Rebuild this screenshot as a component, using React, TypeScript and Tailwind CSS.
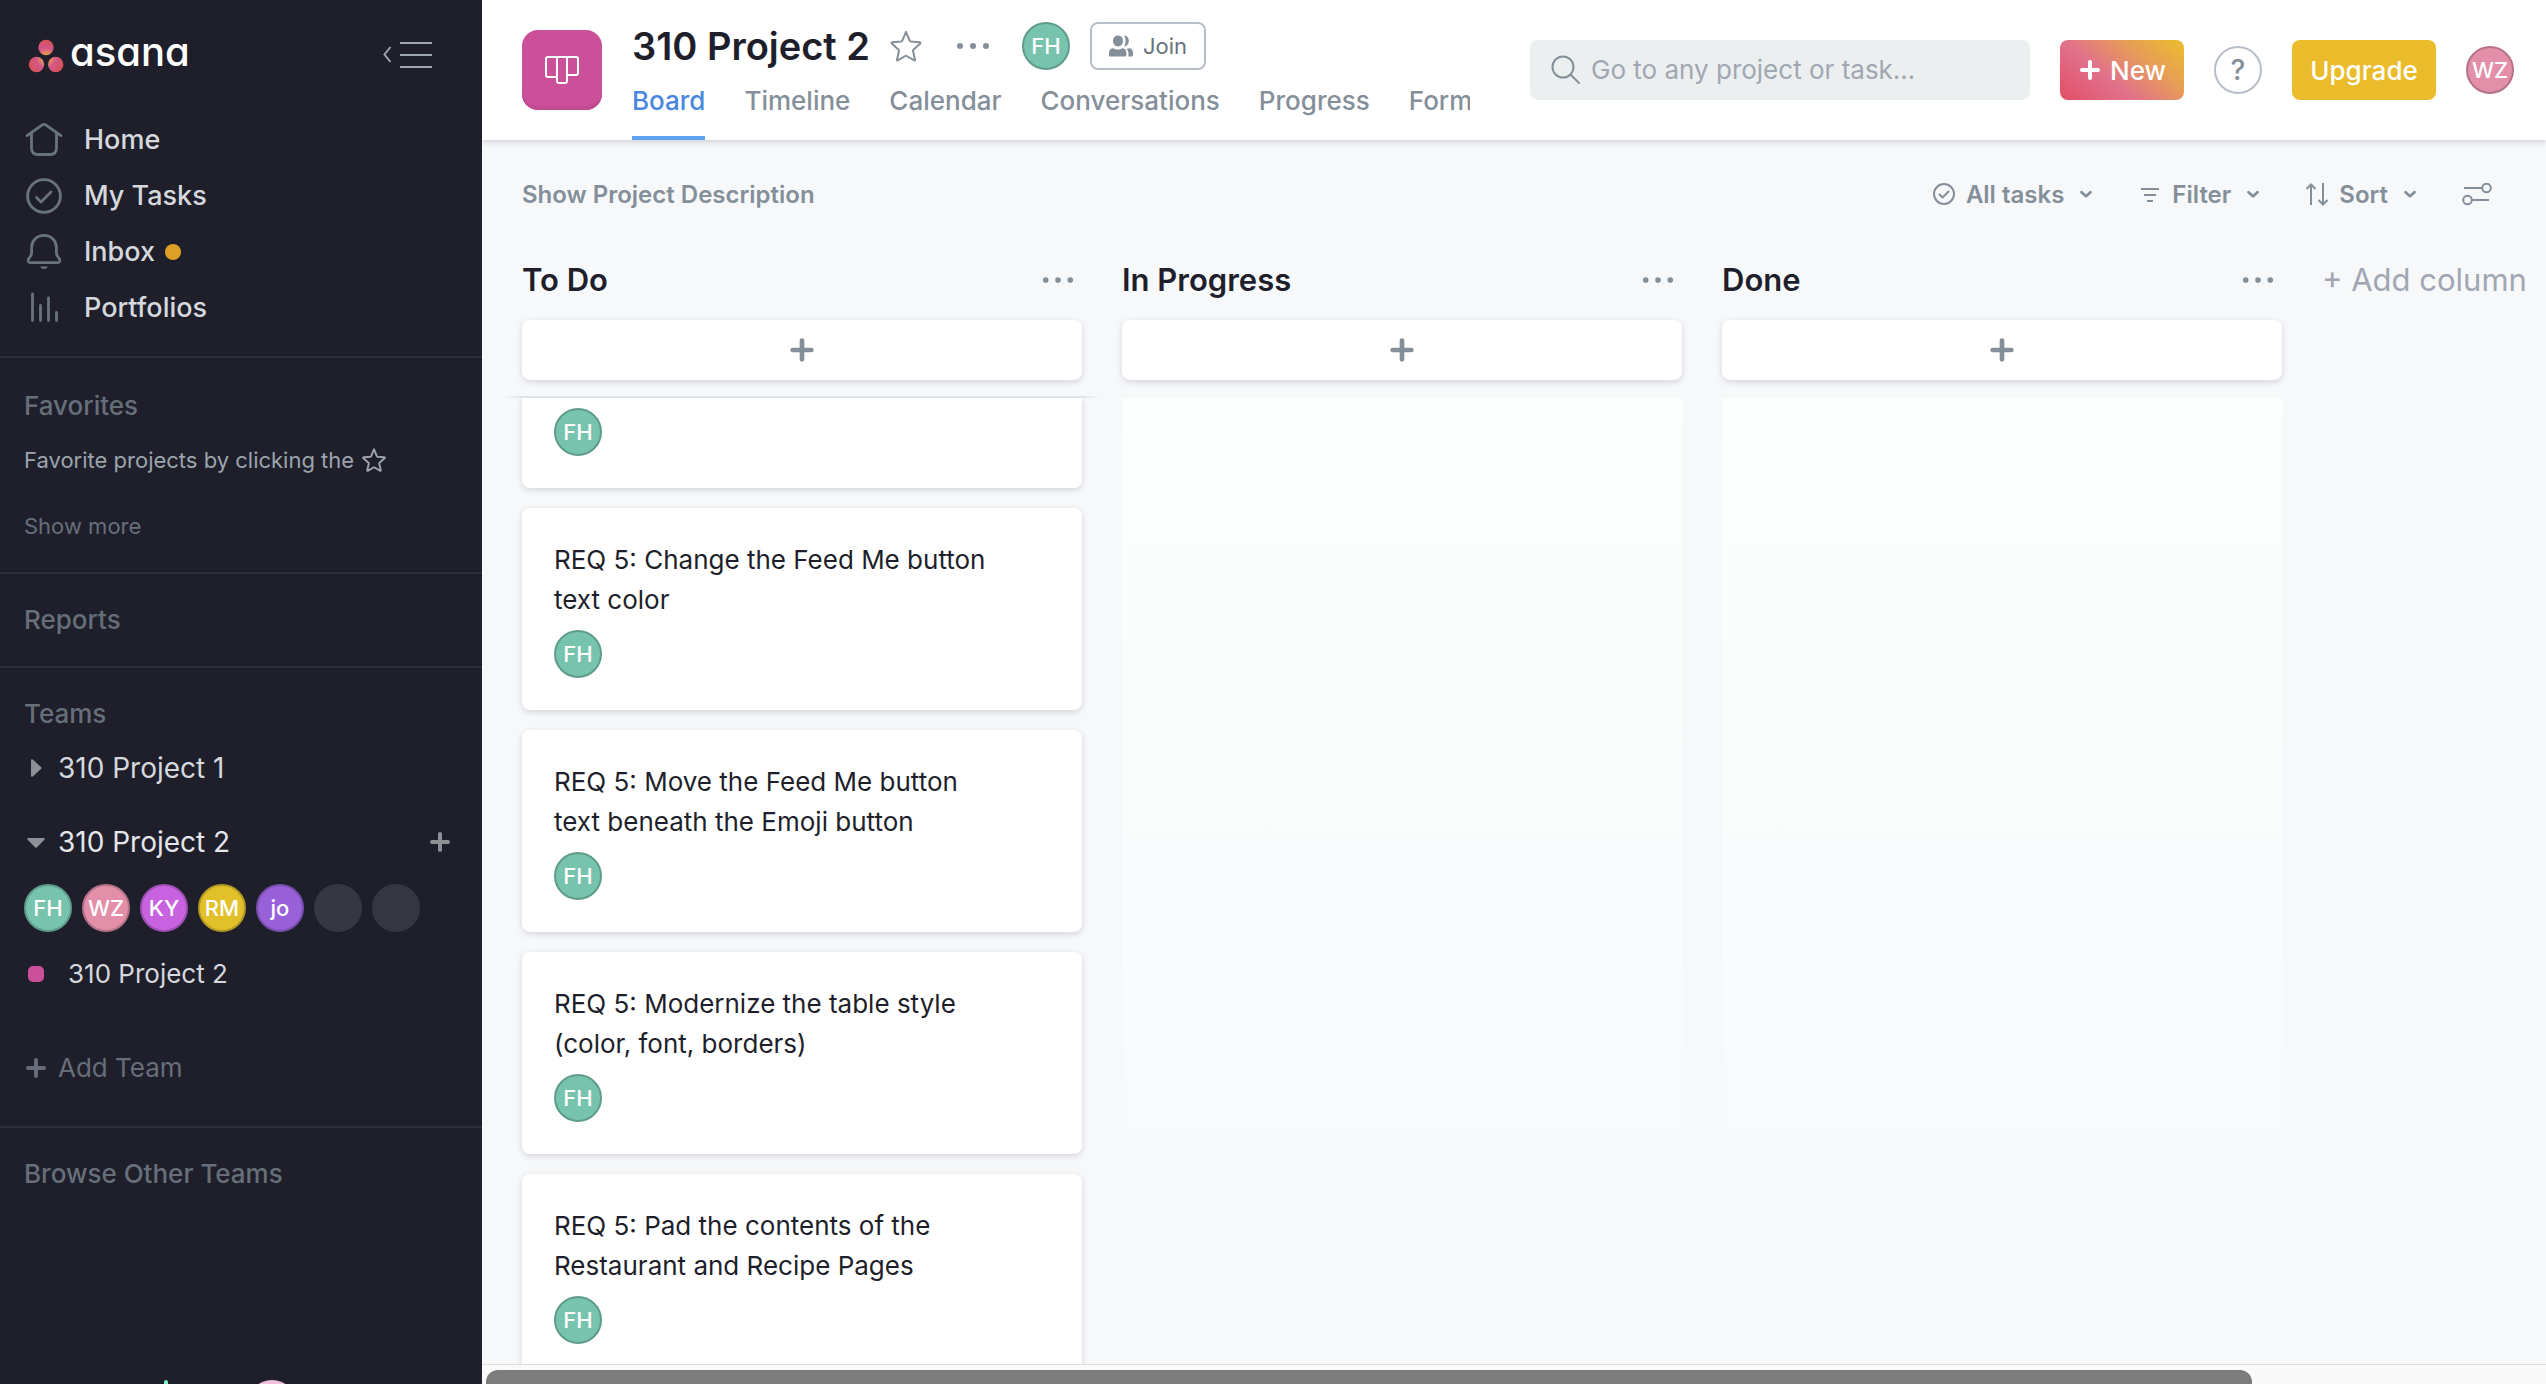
import type { ReactNode } from "react";

type Tone = "teal" | "rose" | "magenta" | "yellow" | "violet" | "empty";

const tones: Record<Tone, string> = {
  teal: "bg-[#78c3ad] border-[#5f9c8a]",
  rose: "bg-[#e38fa9] border-[#b67287]",
  magenta: "bg-[#c862e0] border-[#a04eb3]",
  yellow: "bg-[#e2c02a] border-[#b59a22]",
  violet: "bg-[#9861da] border-[#7a4eae]",
  empty: "bg-[#353840] border-[#353840]",
};

function Avatar({ initials = "", tone }: { initials?: string; tone: Tone }) {
  return (
    <span
      className={`flex size-12 shrink-0 items-center justify-center rounded-full border-2 text-[22px] leading-none font-medium text-white ${tones[tone]}`}
    >
      {initials}
    </span>
  );
}

function Plus({ className }: { className: string }) {
  return (
    <svg viewBox="0 0 24 24" className={`shrink-0 ${className}`} stroke="currentColor" strokeWidth="4" strokeLinecap="round">
      <path d="M12 4v16M4 12h16" />
    </svg>
  );
}

function Star({ className, width }: { className: string; width: number }) {
  return (
    <svg viewBox="0 0 32 32" className={`shrink-0 ${className}`} fill="none" stroke="currentColor" strokeWidth={width} strokeLinejoin="round">
      <path d="M16 1.8 L19.8 10.9 Q20.1 11.5 20.8 11.6 L29.6 12.3 Q31.2 12.6 30 13.8 L23.4 19.7 Q22.9 20.2 23 20.9 L25 29.4 Q25.2 31 23.8 30.2 L16.7 26 Q16 25.6 15.3 26 L8.2 30.2 Q6.8 31 7 29.4 L9 20.9 Q9.1 20.2 8.6 19.7 L2 13.8 Q0.8 12.6 2.4 12.3 L11.2 11.6 Q11.9 11.5 12.2 10.9 Z" />
    </svg>
  );
}

function Dots({ className = "" }: { className?: string }) {
  return (
    <svg viewBox="0 0 34 8" className={`h-2 shrink-0 ${className}`} fill="#848f99">
      <circle cx="4" cy="4" r="3" />
      <circle cx="17" cy="4" r="3" />
      <circle cx="30" cy="4" r="3" />
    </svg>
  );
}

function Chevron() {
  return (
    <svg viewBox="0 0 16 16" className="size-4 shrink-0" fill="none" stroke="currentColor" strokeWidth="2.8" strokeLinecap="round" strokeLinejoin="round">
      <path d="M3.500 5.200l4.500 4 4.500-4" />
    </svg>
  );
}

function NavIcon({ children }: { children: ReactNode }) {
  return (
    <svg viewBox="0 0 40 40" className="size-10 shrink-0" fill="none" stroke="#68737c" strokeWidth="2.8" strokeLinecap="round" strokeLinejoin="round">
      {children}
    </svg>
  );
}

const nav: { label: string; icon: ReactNode; dot?: boolean }[] = [
  {
    label: "Home",
    icon: <path d="M3 15.6 L18.4 4.8 Q20 3.8 21.6 4.8 L37 15.6 M7.5 13.5 V28 Q7.5 34.5 14 34.5 H26 Q32.5 34.5 32.5 28 V13.5" />,
  },
  {
    label: "My Tasks",
    icon: (
      <>
        <circle cx="20" cy="20" r="16.4" />
        <path d="M12.5 21.5l4.5 4.5 10-10" />
      </>
    ),
  },
  {
    label: "Inbox",
    dot: true,
    icon: (
      <>
        <path d="M20 3.4 C12.5 3.4 7.6 9 7.6 15.5 V20.5 Q7.6 23.3 5.6 25.4 Q3.8 27.2 4.2 29 Q4.6 30.6 6.4 30.6 H33.6 Q35.4 30.6 35.8 29 Q36.2 27.2 34.4 25.4 Q32.4 23.3 32.4 20.5 V15.5 C32.4 9 27.5 3.4 20 3.4 Z" />
        <path d="M16 34.4 H24 Q22.8 37 20 37 Q17.2 37 16 34.4 Z" fill="#68737c" stroke="none" />
      </>
    ),
  },
  {
    label: "Portfolios",
    icon: <path d="M8.500 6v26.500M16.500 17.500v15M24.500 10v22.500M32.500 24.500v8" />,
  },
];

const members: { initials?: string; tone: Tone }[] = [
  { initials: "FH", tone: "teal" },
  { initials: "WZ", tone: "rose" },
  { initials: "KY", tone: "magenta" },
  { initials: "RM", tone: "yellow" },
  { initials: "jo", tone: "violet" },
  { tone: "empty" },
  { tone: "empty" },
];

const tabs = ["Timeline", "Calendar", "Conversations", "Progress", "Form"];

const cards = [
  ["REQ 5: Change the Feed Me button", "text color"],
  ["REQ 5: Move the Feed Me button", "text beneath the Emoji button"],
  ["REQ 5: Modernize the table style", "(color, font, borders)"],
  ["REQ 5: Pad the contents of the", "Restaurant and Recipe Pages"],
];

function SectionTitle({ children }: { children: ReactNode }) {
  return <h2 className="text-[26px] leading-10 font-medium text-[#666f79]">{children}</h2>;
}

function Sidebar() {
  return (
    <aside className="flex w-[482px] shrink-0 flex-col bg-[#1e1f2b] text-[#d5d8dd]">
      <div className="flex h-28 shrink-0 items-center justify-between pr-[50px] pl-7">
        <a href="#" aria-label="asana" className="flex items-center gap-1.5 text-white">
          <svg viewBox="0 0 36 34" className="h-[34px] w-9">
            <defs>
              <radialGradient id="petal" gradientUnits="userSpaceOnUse" cx="18" cy="19" r="20">
                <stop offset="0.15" stopColor="#eca04a" />
                <stop offset="0.5" stopColor="#d3568c" />
                <stop offset="1" stopColor="#d9534a" />
              </radialGradient>
            </defs>
            <g fill="url(#petal)">
              <circle cx="18" cy="8.500" r="7.700" />
              <circle cx="8.500" cy="25.500" r="7.700" />
              <circle cx="27.700" cy="25.500" r="7.700" />
            </g>
          </svg>
          <span className="pb-2 text-[40px] leading-10 font-medium [font-feature-settings:'cv11']">asana</span>
        </a>
        <button type="button" aria-label="Hide sidebar">
          <svg viewBox="0 0 50 28" className="h-7 w-[50px]" fill="none" stroke="#9ca6af" strokeWidth="2">
            <path d="M8.500 5L2.500 12.500l6 7.500M18 1h32M18 13h32M18 25h32" />
          </svg>
        </button>
      </div>

      <nav className="border-b-2 border-[#2a2f3b] pb-5">
        {nav.map((item) => (
          <a key={item.label} href="#" className="flex h-14 items-center gap-5 pl-6 text-[27px] leading-10 font-medium">
            <NavIcon>{item.icon}</NavIcon>
            <span>{item.label}</span>
            {item.dot && <span className="-ml-2.5 size-4 rounded-full bg-[#dda024]" />}
          </a>
        ))}
      </nav>

      <section className="flex flex-col items-start border-b-2 border-[#2a2f3b] px-6 pt-7 pb-[26px]">
        <SectionTitle>Favorites</SectionTitle>
        <p className="mt-3.5 flex items-center gap-2 text-[22px] leading-10 whitespace-nowrap text-[#9ca4ac]">
          Favorite projects by clicking the
          <Star className="size-6" width={2.6} />
        </p>
        <button type="button" className="mt-[26px] text-[22px] leading-10 text-[#666f79]">
          Show more
        </button>
      </section>

      <section className="border-b-2 border-[#2a2f3b] px-6 py-[26px]">
        <SectionTitle>Reports</SectionTitle>
      </section>

      <section className="flex flex-col border-b-2 border-[#2a2f3b] px-6 pt-[26px] pb-[38px]">
        <SectionTitle>Teams</SectionTitle>
        <button type="button" className="mt-3.5 flex items-center gap-2.5 text-[28px] leading-10">
          <svg viewBox="0 0 24 24" className="size-6" fill="#8e9096">
            <path d="M7 4.500Q7 2.400 8.800 3.600L17.200 11.200Q18 12 17.200 12.800L8.800 20.400Q7 21.600 7 19.500Z" />
          </svg>
          310 Project 1
        </button>
        <div className="mt-[34px] flex items-center justify-between pr-1.5">
          <button type="button" className="flex items-center gap-2.5 text-[28px] leading-10 text-[#e4e6e9]">
            <svg viewBox="0 0 24 24" className="size-6" fill="#8e9096">
              <path d="M4.500 8Q2.400 8 3.600 9.800L11 17.200Q12 18.200 13 17.200L20.400 9.800Q21.600 8 19.500 8Z" />
            </svg>
            310 Project 2
          </button>
          <button type="button" aria-label="Add project">
            <Plus className="size-6 text-[#8e9096]" />
          </button>
        </div>
        <div className="mt-[22px] flex gap-2.5">
          {members.map((m, i) => (
            <Avatar key={i} {...m} />
          ))}
        </div>
        <a href="#" className="mt-[22px] flex items-center pl-1 text-[26px] leading-10">
          <span className="mr-6 size-4 rounded-[5px] bg-[#cc5099]" />
          310 Project 2
        </a>
        <button type="button" className="mt-[54px] flex items-center gap-2.5 text-[26px] leading-10 text-[#666f79]">
          <Plus className="size-6 text-[#666f79]" />
          Add Team
        </button>
      </section>

      <section className="px-6 pt-[26px]">
        <SectionTitle>Browse Other Teams</SectionTitle>
      </section>

      <svg viewBox="0 0 482 4" className="mt-auto h-1 w-full">
        <rect x="164" y="0" width="4" height="6" rx="2" fill="#7df0c4" />
        <circle cx="272" cy="24" r="24" fill="#f2bfd8" />
      </svg>
    </aside>
  );
}

function Header() {
  return (
    <header className="z-10 flex h-[140px] shrink-0 bg-white pr-8 pl-10 shadow-[0_2px_6px_rgba(30,31,43,0.18)]">
      <div className="mt-[30px] flex size-20 shrink-0 items-center justify-center rounded-2xl bg-[#cc5099] shadow-[inset_0_-4px_0_#c04b90]">
        <svg viewBox="0 0 36 30" className="h-[30px] w-9" fill="none" stroke="#fff" strokeWidth="2" strokeLinejoin="round">
          <path d="M13 22H4a2 2 0 0 1-2-2V4a2 2 0 0 1 2-2h28a2 2 0 0 1 2 2v14a2 2 0 0 1-2 2h-9M13 2v24a2 2 0 0 0 2 2h6a2 2 0 0 0 2-2V2" />
        </svg>
      </div>

      <div className="mr-[60px] ml-[30px] flex min-w-0 flex-1 flex-col overflow-hidden">
        <div className="mt-[22px] flex h-12 shrink-0 items-center">
          <h1 className="text-[38px] leading-[48px] font-semibold whitespace-nowrap text-[#1e1f2b]">310 Project 2</h1>
          <button type="button" aria-label="Add to favorites" className="ml-5">
            <Star className="size-8 text-[#848f99]" width={2} />
          </button>
          <button type="button" aria-label="Project actions" className="ml-[34px]">
            <Dots className="w-[34px]" />
          </button>
          <div className="ml-8">
            <Avatar initials="FH" tone="teal" />
          </div>
          <button
            type="button"
            className="ml-5 flex h-12 items-center gap-2.5 rounded-lg border-2 border-[#b8bec7] px-[17px] text-[22px] text-[#68737c]"
          >
            <svg viewBox="0 0 24 24" className="size-6" fill="#848f99">
              <path d="M9 1.500c3 0 5 2.200 5 5.300S12 12.500 9 12.500 4 9.900 4 6.800s2-5.300 5-5.300z" />
              <path d="M15 1.500c3 0 4.800 2.200 4.800 5.300s-1.800 5.700-4.800 5.700c1-1.400 1.500-3.400 1.500-5.700 0-2.200-.5-4-1.500-5.300z" />
              <path d="M0 21v-2c0-3 2-4.800 4-4.800 1.500.9 3 1.300 4.700 1.300s3.200-.4 4.700-1.300c2 0 4 1.800 4 4.800v2c0 .8-.5 1.500-1.500 1.500h-14.400C.5 22.500 0 21.800 0 21z" />
              <path d="M19.300 22.500h3.200c1 0 1.500-.7 1.500-1.500v-2c0-3-1.800-4.800-3.800-4.800l-2.700.9c1.300 1.200 2 2.700 2 4.400z" />
            </svg>
            Join
          </button>
        </div>
        <nav className="flex flex-1 gap-[39px] text-[26px] leading-10 font-medium whitespace-nowrap text-[#848f99]">
          <a href="#" aria-current="page" className="border-b-4 border-[#5da5f2] pt-[11px] text-[#4a86e0]">
            Board
          </a>
          {tabs.map((tab) => (
            <a key={tab} href="#" className="pt-[11px]">
              {tab}
            </a>
          ))}
        </nav>
      </div>

      <div className="flex shrink-0 items-center gap-[30px]">
        <label className="flex h-[60px] w-[500px] items-center gap-2.5 rounded-lg bg-[#ebeff0] pr-4 pl-[21px]">
          <svg viewBox="0 0 30 30" className="size-[30px] shrink-0" fill="none" stroke="#848f99" strokeWidth="2" strokeLinecap="round">
            <circle cx="12" cy="12" r="10.500" />
            <path d="M19.500 19.500L28 28" />
          </svg>
          <input
            type="text"
            aria-label="Search"
            placeholder="Go to any project or task…"
            className="w-full min-w-0 bg-transparent text-[26px] leading-10 outline-none placeholder:text-[#a0a7b2]"
          />
        </label>
        <button
          type="button"
          className="flex h-[60px] w-[124px] items-center justify-center gap-2 rounded-lg bg-[linear-gradient(40deg,#e2536a_5%,#e1718b_38%,#e79c58_68%,#eab931_95%)] text-[26px] font-medium text-white"
        >
          <Plus className="size-6 text-white" />
          New
        </button>
        <button
          type="button"
          aria-label="Help"
          className="flex size-12 items-center justify-center rounded-full border-2 border-[#b8bec7] text-[28px] font-medium text-[#848f99]"
        >
          ?
        </button>
        <button type="button" className="h-[60px] w-36 rounded-lg bg-[#eabb2a] text-[26px] font-medium text-white">
          Upgrade
        </button>
        <Avatar initials="WZ" tone="rose" />
      </div>
    </header>
  );
}

function Toolbar() {
  return (
    <div className="flex h-[110px] shrink-0 items-center justify-between pr-[54px] pl-10 text-[24px] font-semibold text-[#848f99]">
      <button type="button">Show Project Description</button>
      <div className="flex items-center">
        <button type="button" aria-haspopup="menu" className="flex items-center">
          <svg viewBox="0 0 24 24" className="mr-2.5 size-6" fill="none" stroke="currentColor" strokeWidth="2" strokeLinecap="round" strokeLinejoin="round">
            <circle cx="12" cy="11" r="10" />
            <path d="M7.500 11.500l3 3 6-6" />
          </svg>
          All tasks
          <span className="ml-3.5">
            <Chevron />
          </span>
        </button>
        <button type="button" aria-haspopup="menu" className="ml-11 flex items-center">
          <svg viewBox="0 0 24 24" className="mr-2.5 size-6" stroke="currentColor" strokeWidth="2">
            <path d="M3 6h18M6 12h12M9 18h6" />
          </svg>
          Filter
          <span className="ml-3.5">
            <Chevron />
          </span>
        </button>
        <button type="button" aria-haspopup="menu" className="ml-11 flex items-center">
          <svg viewBox="0 0 24 24" className="mr-2.5 size-6" fill="none" stroke="currentColor" strokeWidth="2">
            <path d="M6 22V1.500M1.500 6L6 1.500 10.500 6M18 0v21.500M13.500 17l4.500 4.500 4.500-4.500" />
          </svg>
          Sort
          <span className="ml-3.5">
            <Chevron />
          </span>
        </button>
        <button type="button" aria-label="Customize" className="ml-11">
          <svg viewBox="0 0 30 24" className="h-6 w-[30px]" fill="none" stroke="currentColor" strokeWidth="2">
            <path d="M2 5h18M10 17h17" />
            <circle cx="24.500" cy="5" r="4.300" />
            <circle cx="5.500" cy="17" r="4.300" />
          </svg>
        </button>
      </div>
    </div>
  );
}

function Column({ title, children }: { title: string; children?: ReactNode }) {
  return (
    <section className="flex w-[560px] shrink-0 flex-col">
      <div className="flex h-[60px] items-center justify-between pr-2">
        <h2 className="text-[31px] leading-[60px] font-semibold text-[#1e1f2b]">{title}</h2>
        <button type="button" aria-label={`${title} actions`}>
          <Dots className="w-8" />
        </button>
      </div>
      <button
        type="button"
        aria-label={`Add task to ${title}`}
        className="mt-2.5 flex h-[60px] shrink-0 items-center justify-center rounded-lg bg-white shadow-[0_2px_6px_rgba(30,31,43,0.16)]"
      >
        <Plus className="size-7 text-[#848f99]" />
      </button>
      {children ?? <div className="mt-[18px] flex-1 bg-linear-to-b from-[#fdfefe] to-[#f6f8fa]" />}
    </section>
  );
}

function Card({ lines }: { lines?: string[] }) {
  return (
    <article
      className={`shrink-0 bg-white px-8 pb-8 shadow-[0_2px_6px_rgba(30,31,43,0.16)] ${lines ? "rounded-lg pt-8" : "rounded-b-lg"}`}
    >
      {lines?.map((line) => (
        <p key={line} className="text-[26px] leading-10 whitespace-nowrap text-[#1e1f2b]">
          {line}
        </p>
      ))}
      <div className="pt-2.5">
        <Avatar initials="FH" tone="teal" />
      </div>
    </article>
  );
}

export default function App() {
  return (
    <div className="flex h-screen overflow-hidden bg-[#f6f8fa] font-['Inter',sans-serif]">
      <Sidebar />
      <div className="flex min-w-0 flex-1 flex-col">
        <Header />
        <Toolbar />
        <main className="flex min-h-0 flex-1 gap-10 overflow-hidden pl-10">
          <Column title="To Do">
            <div className="-mx-[18px] mt-4 h-0.5 shrink-0 bg-[linear-gradient(90deg,transparent,#dfe3e7_18px,#dfe3e7_calc(100%-18px),transparent)]" />
            <div className="-mx-[18px] flex min-h-0 flex-1 flex-col gap-5 overflow-hidden px-[18px]">
              <Card />
              {cards.map((lines) => (
                <Card key={lines[0]} lines={lines} />
              ))}
            </div>
          </Column>
          <Column title="In Progress" />
          <Column title="Done" />
          <button type="button" className="flex h-[60px] items-center text-[31px] whitespace-nowrap text-[#a0a7b2]">
            + Add column
          </button>
        </main>
        <div className="h-5 shrink-0 border-t border-[#dcdfe0] bg-[#f9f9f9] pt-[5px] pr-[294px] pl-1">
          <div className="h-3.5 rounded-t-[12px] bg-[#7c7c7c]" />
        </div>
      </div>
    </div>
  );
}
